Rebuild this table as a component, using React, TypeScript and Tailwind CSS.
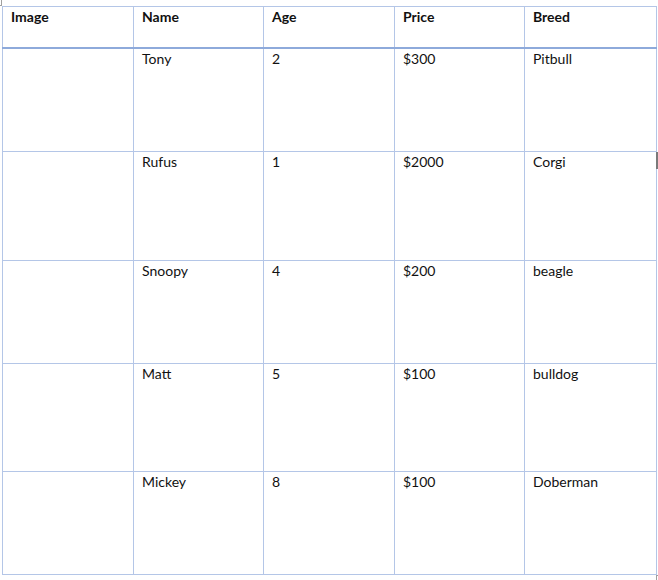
import React from 'react';

interface Dog {
  name: string;
  age: number;
  price: string;
  breed: string;
  height: number;
}

const dogs: Dog[] = [
  { name: 'Tony', age: 2, price: '$300', breed: 'Pitbull', height: 104 },
  { name: 'Rufus', age: 1, price: '$2000', breed: 'Corgi', height: 109 },
  { name: 'Snoopy', age: 4, price: '$200', breed: 'beagle', height: 103 },
  { name: 'Matt', age: 5, price: '$100', breed: 'bulldog', height: 108 },
  { name: 'Mickey', age: 8, price: '$100', breed: 'Doberman', height: 103 },
];

const cell = 'border border-[#b4c6e7] align-top px-[8px] pt-[1px] text-[14px] leading-[18px] text-[#111]';

export default function App() {
  return (
    <div className="relative w-[658px] h-[580px] bg-white font-['Lato',sans-serif]">
      {/* Word corner marks */}
      <span className="absolute left-[1px] top-0 w-px h-[5px] bg-[#a0a0a0]" />
      <span className="absolute left-0 top-[5px] w-[2px] h-px bg-[#a0a0a0]" />
      <span className="absolute left-[656px] top-[152px] w-[2px] h-[17px] bg-[#7a7a7a]" />
      <span className="absolute left-[656px] top-[575px] w-px h-[5px] bg-[#a0a0a0]" />
      <span className="absolute left-[656px] top-[575px] w-[2px] h-px bg-[#a0a0a0]" />

      <div className="pl-[2px] pt-[6px]">
        <table className="border-collapse table-fixed w-[654px]">
          <colgroup>
            <col className="w-[131px]" />
            <col className="w-[130px]" />
            <col className="w-[131px]" />
            <col className="w-[130px]" />
            <col className="w-[132px]" />
          </colgroup>
          <thead>
            <tr className="h-[41px]">
              {['Image', 'Name', 'Age', 'Price', 'Breed'].map((h) => (
                <th key={h} className={`${cell} text-left font-bold border-b-2 border-b-[#8eaadb]`}>
                  {h}
                </th>
              ))}
            </tr>
          </thead>
          <tbody>
            {dogs.map((d) => (
              <tr key={d.name} style={{ height: d.height }}>
                <td className={cell}></td>
                <td className={cell}>{d.name}</td>
                <td className={cell}>{d.age}</td>
                <td className={cell}>{d.price}</td>
                <td className={cell}>{d.breed}</td>
              </tr>
            ))}
          </tbody>
        </table>
      </div>
    </div>
  );
}
